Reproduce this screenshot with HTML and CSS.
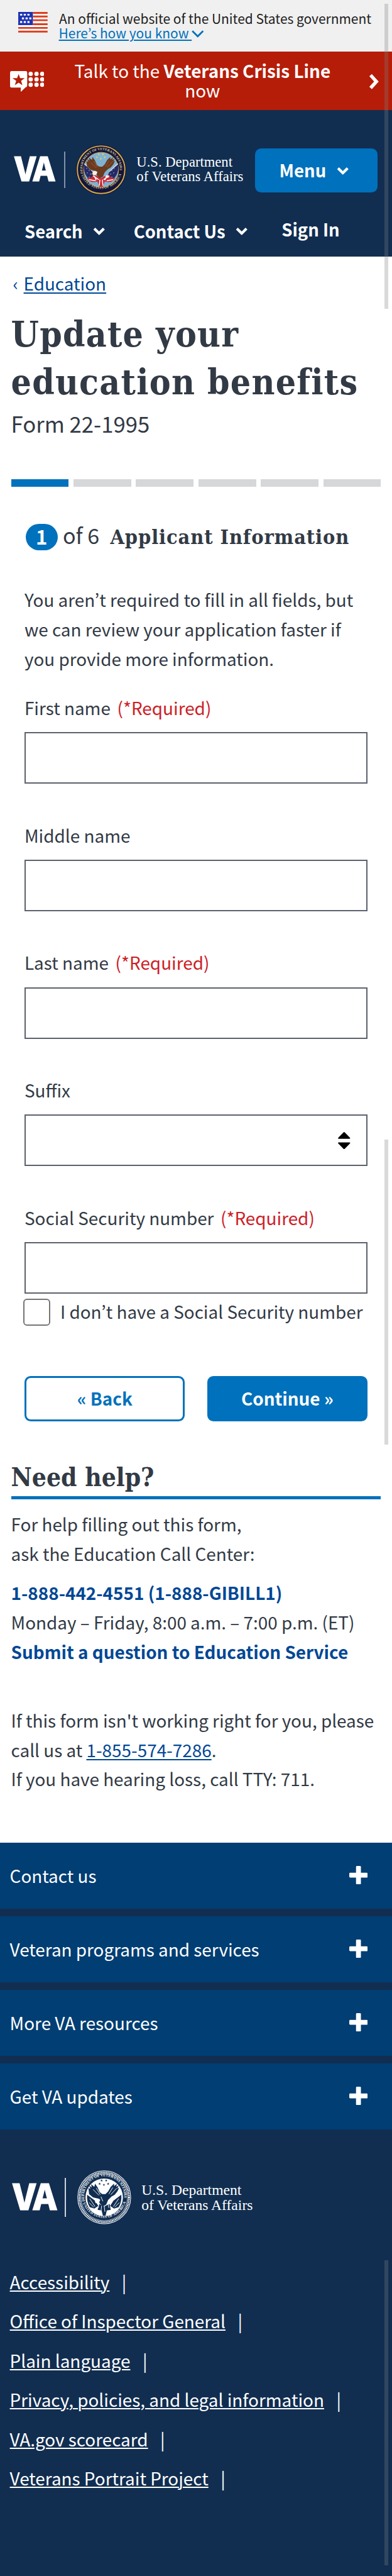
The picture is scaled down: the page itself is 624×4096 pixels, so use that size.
FILE: index.html
```html
<!DOCTYPE html>
<html lang="en">
<head>
<meta charset="utf-8">
<title>Update your education benefits</title>
<link rel="stylesheet" href="styles.css">
</head>
<body>
<svg class="defs" width="0" height="0" aria-hidden="true">
  <symbol id="chevron" viewBox="0 0 20 13"><path d="M2.200 2.600 10 10.200l7.800-7.600" fill="none" stroke="currentColor" stroke-width="4.400" stroke-linecap="butt"/></symbol>
  <symbol id="plus" viewBox="0 0 30 30"><path d="M12.500 0h5q1.500 0 1.500 1.500V11h9.500q1.500 0 1.500 1.500v5q0 1.500-1.500 1.500H19v9.500q0 1.500-1.500 1.500h-5q-1.500 0-1.500-1.500V19H1.500Q0 19 0 17.500v-5Q0 11 1.500 11H11V1.500Q11 0 12.500 0z" fill="currentColor"/></symbol>
  <path id="star" d="M0-2 .5-.6H2L.8.3 1.200 1.700 0 .8-1.200 1.700-.8.3-2-.6H-.5z"/>
  <path id="arc-top" d="M11.500 47A30.500 30.500 0 1 1 70.500 47"/>
  <path id="arc-bottom" d="M7.500 46A34.500 34.500 0 0 0 74.500 46"/>
</svg>

<header>
  <div class="gov">
    <svg class="flag" viewBox="0 0 48 34">
      <path fill="#fff" d="M0 0h48v34H0z"/>
      <path fill="#db3e1f" d="M24 0h24v3H24zM24 6h24v3H24zM24 12h24v3H24zM24 18.500h24v3H24zM0 24.500h48v3H0zM0 30.500h48v3H0z"/>
      <path fill="#1e33b1" d="M0 0h24v21.500H0z"/>
      <path fill="#fff" d="M3 3h3.500v3H3zM9 3h3.500v3H9zM15 3h3.500v3H15zM6 9h3.500v3H6zM12 9h3.500v3H12zM18 9h3.500v3H18zM3 15h3.500v3H3zM9 15h3.500v3H9zM15 15h3.500v3H15z"/>
    </svg>
    <div>
      <div>An official website of the United States government</div>
      <a href="#" class="gov-link">Here’s how you know </a><svg class="gov-chev" viewBox="0 0 20 12"><path d="M1.200 1.200 10 10l8.800-8.800" fill="none" stroke="currentColor" stroke-width="2.800"/></svg>
    </div>
  </div>

  <a href="#" class="crisis">
    <svg class="crisis-icon" viewBox="0 0 56 34">
      <path fill="#fff" d="M2.500 0h23q2.500 0 2.500 2.500v21q0 2.500-2.500 3L17.500 34v-7h-15Q0 27 0 24.500v-22Q0 0 2.500 0z"/>
      <path fill="#b51d09" d="m14 5 2.500 6.500H24l-6 4.500 2.200 7L14 19l-6.200 4L10 16 4 11.500h7.500z"/>
      <g fill="#fff"><circle cx="33.700" cy="4.500" r="3.500"/><circle cx="43.200" cy="4.500" r="3.500"/><circle cx="52.500" cy="4.500" r="3.500"/><circle cx="33.700" cy="13.500" r="3.500"/><circle cx="43.200" cy="13.500" r="3.500"/><circle cx="52.500" cy="13.500" r="3.500"/><circle cx="33.700" cy="22.300" r="3.500"/><circle cx="43.200" cy="22.300" r="3.500"/><circle cx="52.500" cy="22.300" r="3.500"/></g>
    </svg>
    <span class="crisis-text">Talk to the <b>Veterans Crisis Line</b><br>now</span>
    <svg class="crisis-chev" viewBox="0 0 17 26"><path d="M3 2.500 12.500 13 3 23.500" fill="none" stroke="#fff" stroke-width="5.500"/></svg>
  </a>

  <div class="masthead">
    <div class="brand">
      <span class="va">VA</span>
      <span class="rule"></span>
      <svg class="seal" viewBox="0 0 82 82">
        <circle cx="41" cy="41" r="41" fill="#15143a"/>
        <circle cx="41" cy="41" r="38.800" fill="none" stroke="#d2ab4a" stroke-width="2"/>
        <circle cx="41" cy="41" r="28.500" fill="#7fb2d2" stroke="#c9a84a" stroke-width="1"/>
        <g class="seal-text" fill="#d8cf9a"><text><textPath href="#arc-top" textLength="106">DEPARTMENT OF VETERANS AFFAIRS</textPath></text><text><textPath href="#arc-bottom" startOffset="4" textLength="85">UNITED STATES OF AMERICA</textPath></text></g>
        <g fill="#f0d35a"><use href="#star" x="37" y="15.500"/><use href="#star" x="44" y="15.500"/><use href="#star" x="34" y="20.500"/><use href="#star" x="47" y="20.500"/><use href="#star" x="40.500" y="23"/></g>
        <path d="m13 32 14 11 5 12-10 2q-8-7-9-17zM69 32 55 43l-5 12 10 2q8-7 9-17z" fill="#232a66"/>
        <path d="m13.500 31 14 13M68.500 31l-14 13" stroke="#e8e4dc" stroke-width="1.200"/>
        <path d="M17 39h1m3 3h1m-4 4h1m4 2h1m-3 5h1m41-14h-1m-3 3h-1m4 4h-1m-4 2h-1m3 5h-1" stroke="#fff" stroke-width="1.200"/>
        <path d="M18 54q8 1 10-5l9 3 4 3 4-3 9-3q2 6 10 5-4 8-13 7l-4-1-3 9h-6l-3-9-4 1q-9 1-13-7z" fill="#c62b38"/>
        <path d="m21 57 11 2m-4-8 9 6m24 0-11 2m4-8-9 6m-6 0-1 10m5-10 1 10m-14-16 3 7m17-7-3 7" stroke="#fff" stroke-width="1.500"/>
        <path d="m17 27 3 1-2-5 4 3-1-5 5 4 1-5 4 6 3 7 4 3h5l4-4 4-7 5-5v4l5-4-2 5 4-2-2 5 3-2-3 6-4 5-5 3-5 5-3 7-5 3-5-5-2-7-8-2-6-5z" fill="#6b3a1f"/>
        <path d="m24 29 9 9m-4-11 6 10m25-10-9 10m3-11-6 10" stroke="#9a6236" stroke-width="1"/>
        <path d="M27 44q5-3 8 1l-2 4-5 1-1-3zM48 51q5-3 6 2l-5 2z" fill="#f4efe4"/>
        <path d="m27 46-2 2 3 1z" fill="#e6b730"/>
      </svg>
      <span class="dept">U.S. Department<br>of Veterans Affairs</span>
      <button class="menu">Menu<svg class="chev"><use href="#chevron"/></svg></button>
    </div>
    <nav>
      <a href="#" class="drop">Search<svg class="chev"><use href="#chevron"/></svg></a>
      <a href="#" class="drop contact">Contact Us<svg class="chev"><use href="#chevron"/></svg></a>
      <a href="#" class="signin">Sign In</a>
    </nav>
  </div>
</header>

<main>
  <div class="crumb"><span>‹</span><a href="#">Education</a></div>
  <h1>Update your education benefits</h1>
  <p class="form-no">Form 22-1995</p>
  <div class="progress"><i class="done"></i><i></i><i></i><i></i><i></i><i></i></div>

  <form>
    <div class="step"><span class="num">1</span><span class="of">of 6</span><span class="step-title">Applicant Information</span></div>
    <p class="intro">You aren’t required to fill in all fields, but<br>we can review your application faster if<br>you provide more information.</p>
    <div class="fields">
      <div class="field"><label for="first">First name <em>(*Required)</em></label><input id="first"></div>
      <div class="field"><label for="middle">Middle name</label><input id="middle"></div>
      <div class="field"><label for="last">Last name <em>(*Required)</em></label><input id="last"></div>
      <div class="field"><label for="suffix">Suffix</label>
        <div class="select"><select id="suffix"><option></option></select><svg class="arrows" viewBox="0 0 20 28"><path d="M9 .6q1-1 2 0l8.500 8.600q1 1.800-.5 1.800H1q-1.500 0-.5-1.800zM9 27.400q1 1 2 0l8.500-8.600q1-1.800-.5-1.800H1q-1.500 0-.5 1.800z"/></svg></div>
      </div>
      <div class="field"><label for="ssn">Social Security number <em>(*Required)</em></label><input id="ssn"></div>
    </div>
    <label class="check"><input type="checkbox"><span>I don’t have a Social Security number</span></label>
    <div class="actions"><button class="back" type="button">« Back</button><button class="next" type="button">Continue »</button></div>
  </form>

  <section class="help">
    <h2>Need help?</h2>
    <p>For help filling out this form,<br>ask the Education Call Center:</p>
    <p class="contact-lines"><a href="#">1-888-442-4551 (1-888-GIBILL1)</a><br>Monday – Friday, 8:00 a.m. – 7:00 p.m. (ET)<br><a href="#">Submit a question to Education Service</a></p>
    <p class="trouble">If this form isn't working right for you, please<br>call us at <a href="#">1-855-574-7286</a>.<br>If you have hearing loss, call TTY: 711.</p>
  </section>
</main>

<footer>
  <div class="accordion">
    <button>Contact us<svg><use href="#plus"/></svg></button>
    <button>Veteran programs and services<svg><use href="#plus"/></svg></button>
    <button>More VA resources<svg><use href="#plus"/></svg></button>
    <button>Get VA updates<svg><use href="#plus"/></svg></button>
  </div>
  <div class="brand foot-brand">
    <span class="va">VA</span>
    <span class="rule"></span>
    <svg class="seal" viewBox="0 0 82 82">
      <g fill="none" stroke="#fff"><circle cx="41" cy="41" r="40.300" stroke-width="1"/><circle cx="41" cy="41" r="37.700" stroke-width="2.600" stroke-dasharray="1.500 .9"/><circle cx="41" cy="41" r="35.500" stroke-width=".7"/></g>
      <circle cx="41" cy="41" r="28.500" fill="#fff"/>
      <g class="seal-text" fill="#fff"><text><textPath href="#arc-top" textLength="106">DEPARTMENT OF VETERANS AFFAIRS</textPath></text><text><textPath href="#arc-bottom" startOffset="4" textLength="85">UNITED STATES OF AMERICA</textPath></text></g>
      <g fill="#112e51"><use href="#star" x="37" y="15.500"/><use href="#star" x="44" y="15.500"/><use href="#star" x="34" y="20.500"/><use href="#star" x="47" y="20.500"/><use href="#star" x="40.500" y="22"/>
      <path d="m17 27 3 1-2-5 4 3-1-5 5 4 1-5 4 6 3 7 4 3h5l4-4 4-7 5-5v4l5-4-2 5 4-2-2 5 3-2-3 6-4 5-5 3-5 5-3 7-5 3-5-5-2-7-8-2-6-5z"/>
      <path d="m15 37 12 9 5 8-6 4-7-2q-5-8-4-19zM67 37 55 46l-5 8 6 4 7-2q5-8 4-19zM33 51l8 4 8-4 2 9-6 1-2 8h-4l-2-8-6-1z"/></g>
      <path d="m24 29 9 9m-4-11 6 10m25-10-9 10m3-11-6 10M19 43l8 12m-9-6 7 7m38-13-8 12m9-6-7 7m-20-2-1 9m5-9 1 9m-9-12-1 6m15-6 1 6M36 40l3 7" stroke="#fff" stroke-width=".9"/>
      <path d="M27 44q5-3 8 1l-2 4-5 1-1-3z" fill="#fff"/>
    </svg>
    <span class="dept">U.S. Department<br>of Veterans Affairs</span>
  </div>
  <ul class="links">
    <li><a href="#">Accessibility</a><span>|</span></li>
    <li><a href="#">Office of Inspector General</a><span>|</span></li>
    <li><a href="#">Plain language</a><span>|</span></li>
    <li><a href="#">Privacy, policies, and legal information</a><span>|</span></li>
    <li><a href="#">VA.gov scorecard</a><span>|</span></li>
    <li><a href="#">Veterans Portrait Project</a><span>|</span></li>
  </ul>
</footer>

<div class="thumb thumb-top"></div>
<div class="thumb thumb-mid"></div>
<div class="thumb thumb-end"></div>
</body>
</html>
```
FILE: styles.css
```css
html { font-size: 9.75px; }
* { box-sizing: border-box; }
body {
  margin: 0;
  position: relative;
  display: flex;
  flex-direction: column;
  width: 624px;
  height: 4096px;
  overflow: hidden;
  background: #fff;
  color: #323a45;
  font: 2.86rem/4.8rem "Noto Sans CJK JP", "Noto Sans", sans-serif;
}
h1, h2, p, ul { margin: 0; padding: 0; }
svg { display: block; flex: none; }
button { font: inherit; border: 0; margin: 0; padding: 0; text-align: left; }
a { color: inherit; text-decoration: none; }
.defs { position: absolute; }

.gov {
  display: flex;
  height: 8.4rem;
  padding: 1.83rem 0 0 3rem;
  background: #f0f0f0;
  color: #212121;
  font-size: 2.15rem;
  line-height: 2.38rem;
  white-space: nowrap;
}
.flag { width: 4.8rem; height: 3.4rem; margin: .12rem 1.85rem 0 0; }
.gov-link { color: #0071bc; text-decoration: underline; text-decoration-thickness: 2px; text-underline-offset: 2px; margin-left: -.05rem; }
.gov-chev { display: inline-block; width: 2rem; height: 1.2rem; color: #0071bc; vertical-align: .1rem; }

.crisis { display: flex; height: 9.6rem; padding: 1.5rem 2.1rem 0 1.6rem; background: #b51d09; color: #fff; line-height: 3.2rem; }
.crisis-icon { width: 5.6rem; height: 3.4rem; margin-top: 1.7rem; }
.crisis-text { flex: 1; margin-right: 1.3rem; text-align: center; }
.crisis-chev { width: 1.7rem; height: 2.6rem; margin-top: 2.1rem; }

.masthead { height: 23.8rem; padding-top: 5.6rem; background: #112e51; color: #fff; }
.brand { display: flex; align-items: flex-start; height: 8.2rem; padding: 0 2.4rem 0 2.4rem; color: #fff; }
.va { width: 8.1rem; margin-top: 1.62rem; font-size: 5.35rem; line-height: 4rem; font-weight: 900; letter-spacing: -.3rem; -webkit-text-stroke: 1.2px #fff; }
.rule { width: .2rem; height: 6rem; margin-top: 1.1rem; background: #8292a8; }
.seal { width: 8.2rem; height: 8.2rem; margin-left: 1.7rem; }
.seal-text { font: 700 5.6px "Liberation Serif", serif; }
.dept { margin: 1.72rem 0 0 1.7rem; font: 2.32rem/2.34rem "Liberation Serif", serif; white-space: nowrap; }
.menu {
  display: flex;
  width: 20rem;
  height: 7.2rem;
  margin: .6rem 0 0 auto;
  padding-left: 4rem;
  border-radius: 1rem;
  background: #0071bc;
  color: #fff;
  font-weight: 700;
  font-size: 2.82rem;
  line-height: 7.1rem;
}
.chev { width: 2rem; height: 1.3rem; margin-left: 1.7rem; }
.menu .chev { margin-top: 3rem; }
nav { display: flex; margin-top: 3.55rem; padding-left: 4rem; font-weight: 700; font-size: 2.82rem; line-height: 4rem; }
.drop { display: flex; padding-top: .35rem; }
.drop .chev { margin-top: 1.35rem; }
.contact { margin-left: 4.6rem; }
.signin { margin-left: 5.5rem; }

main { padding: 2.38rem 1.8rem 7.95rem; }
.crumb { line-height: 4rem; color: #004795; }
.crumb span { display: inline-block; width: 2.05rem; padding-left: .3rem; }
.crumb a, .trouble a { text-decoration: underline; text-decoration-thickness: 2px; text-underline-offset: 3px; }
.trouble a { color: #004795; }
h1 { margin-top: 2.42rem; font: 700 5.8rem/7.8rem "DejaVu Serif Condensed", "DejaVu Serif", serif; letter-spacing: .125rem; width: 59rem; }
.form-no { margin-top: .65rem; font-size: 3.56rem; line-height: 4.4rem; }
.progress { display: grid; grid-template-columns: repeat(6, 1fr); gap: .8rem; margin-top: 6.95rem; height: 1.2rem; }
.progress i { background: #d6d7d9; }
.progress .done { background: #0071bc; }

form { padding: 0 2.2rem; }
.step { display: flex; height: 4.4rem; margin: 6rem 0 5.6rem .2rem; white-space: nowrap; }
.num { width: 5.2rem; height: 4.4rem; border-radius: 2.2rem; background: #0071bc; color: #fff; text-align: center; font-weight: 700; font-size: 3.2rem; line-height: 4rem; }
.of { width: 8.6rem; padding-left: .85rem; font-size: 3.5rem; line-height: 3.6rem; }
.step-title { font: 700 3.3rem/4.35rem "DejaVu Serif Condensed", "DejaVu Serif", serif; letter-spacing: .095rem; }
.fields { display: flex; flex-direction: column; gap: 6.42rem; margin-top: 3.62rem; }
.field label { display: block; margin-bottom: 1.98rem; line-height: 4rem; }
.field em { margin-left: .45rem; font-style: normal; color: #cd2026; }
.field input, .field select { display: block; width: 100%; height: 8.4rem; margin: 0; border: 2px solid #5b616b; border-radius: 0; background: #fff; appearance: none; }
.select { position: relative; }
.arrows { position: absolute; right: 2.8rem; top: 2.8rem; width: 2rem; height: 2.8rem; }
.check { display: flex; margin: .8rem 0 0 -.2rem; height: 4.4rem; line-height: 4.25rem; white-space: nowrap; }
.check input { appearance: none; flex: none; width: 4.4rem; height: 4.4rem; margin: 0 1.65rem 0 0; border: 2px solid #757575; border-radius: .6rem; background: #fff; }
.actions { display: grid; grid-template-columns: 1fr 1fr; gap: 3.6rem; margin-top: 8.2rem; }
.actions button { height: 7.4rem; border: .4rem solid #0071bc; border-radius: 1rem; font-weight: 700; text-align: center; line-height: 6.4rem; padding-bottom: .2rem; }
.back { background: #fff; color: #0071bc; }
.next { background: #0071bc; color: #fff; }

h2 { margin-top: 6.65rem; padding-bottom: .55rem; border-bottom: .6rem solid #0071bc; font: 700 4.15rem/5rem "DejaVu Serif Condensed", "DejaVu Serif", serif; }
.help p { margin-top: 1.65rem; white-space: nowrap; }
.help .contact-lines { margin-top: 1.6rem; }
.contact-lines a { color: #004795; font-weight: 700; }
.help .trouble { margin-top: 6.4rem; }

footer { flex: 1; background: #112e51; color: #fff; }
.accordion { display: grid; gap: 1.2rem; }
.accordion button { display: flex; justify-content: space-between; height: 10.8rem; padding: 0 4rem 0 1.6rem; background: #003e73; color: #fff; line-height: 10.8rem; }
.accordion svg { width: 3rem; height: 3rem; margin-top: 3.8rem; }
.foot-brand { height: 8.8rem; margin-top: 6.7rem; padding-left: 2.1rem; }
.foot-brand .va { width: 8.5rem; margin-top: 1.73rem; font-size: 5.8rem; line-height: 4.4rem; }
.foot-brand .rule { height: 6.4rem; margin-top: 1.2rem; background: #cfd5dc; }
.foot-brand .seal { width: 8.8rem; height: 8.8rem; margin-left: 1.8rem; }
.foot-brand .dept { margin: 1.95rem 0 0 1.7rem; font-size: 2.42rem; line-height: 2.47rem; }
.links { margin-top: 6.15rem; padding-left: 1.6rem; list-style: none; line-height: 6.4rem; }
.links a { text-decoration: underline; text-decoration-thickness: 2px; text-underline-offset: 2px; }
.links span { margin-left: 2rem; }

/* scroll thumbs drawn over the page edge */
.thumb { position: absolute; right: .6rem; width: .6rem; background: rgba(130, 130, 130, .3); }
.thumb-top { top: .6rem; height: 49.8rem; }
.thumb-mid { top: 185.8rem; height: 49.8rem; }
.thumb-end { top: 368.6rem; height: 49.8rem; }
```
